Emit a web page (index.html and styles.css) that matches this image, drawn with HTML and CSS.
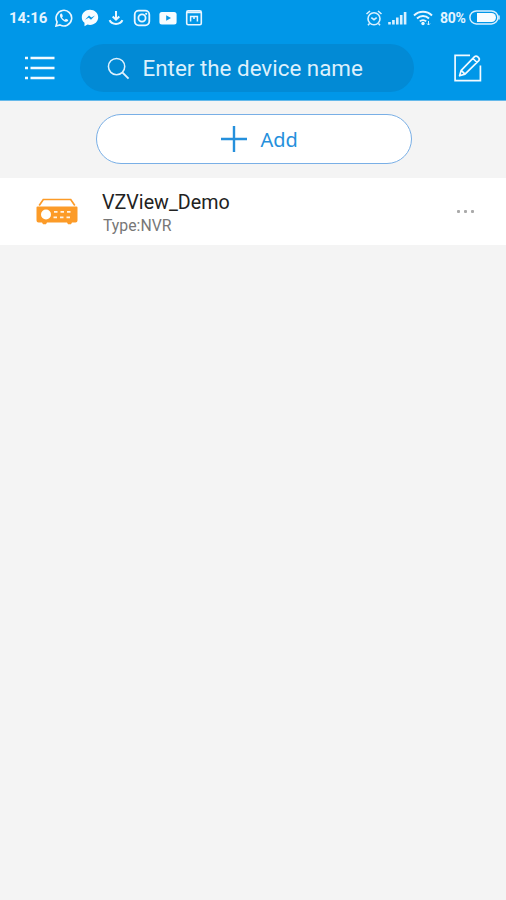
FILE: index.html
```html
<!DOCTYPE html>
<html lang="en">
<head>
<meta charset="utf-8">
<title>Devices</title>
<link rel="stylesheet" href="styles.css">
</head>
<body>
<header class="header">
  <div class="status">
    <div class="status-left">
      <span class="time">14:16</span>
      <svg class="notif" viewBox="0 0 18 18"><path d="M1 17l1.100-4A7.800 7.800 0 1 1 5 15.900z" fill="none" stroke="#e9f6ff" stroke-width="1.600"/><path d="M6 4.600c-2 1.400-.8 4.100 1.200 6.100s4.700 3 6 1.100l-.2-1-2.100-1-1.200 1.100C8.300 10.300 7.400 9.400 7 8.300l.9-1.100L7 4.700z" fill="#e9f6ff"/></svg>
      <svg class="notif" viewBox="0 0 18 18"><path d="M9 .8C4.300.8.800 4 .8 8.300c0 2.300 1 4.200 2.700 5.500v3.400l3-1.600c.8.200 1.600.3 2.500.3 4.700 0 8.200-3.300 8.200-7.600S13.700.8 9 .8z" fill="#f7fcff"/><path d="M4 10.800l4-4.200 2.300 2 3.700-2-4 4.200-2.300-2z" fill="#0997e5"/></svg>
      <svg class="notif" viewBox="0 0 18 18"><path d="M9 2v8M5.700 7.500L9 10.700l3.300-3.200M2.600 11.200c2 5 10.800 5 12.800 0" fill="none" stroke="#e9f6ff" stroke-width="2"/></svg>
      <svg class="notif" viewBox="0 0 18 18"><rect x="1.700" y="1.700" width="14.600" height="14.600" rx="4" fill="none" stroke="#e9f6ff" stroke-width="1.800"/><circle cx="9" cy="9" r="3.600" fill="none" stroke="#e9f6ff" stroke-width="1.800"/><circle cx="13.200" cy="4.800" r="1.100" fill="#e9f6ff"/></svg>
      <svg class="notif" viewBox="0 0 18 18"><rect x=".4" y="3" width="17.200" height="12.400" rx="2.500" fill="#f7fcff"/><path d="M7.200 6.300v5.400L12 9z" fill="#0997e5"/></svg>
      <svg class="notif" viewBox="0 0 18 18"><rect x="1.700" y="1.900" width="14.600" height="13.800" rx="1.500" fill="none" stroke="#e9f6ff" stroke-width="1.600"/><path d="M2 3.500h14" stroke="#e9f6ff" stroke-width="1.500"/><path d="M5.600 12.500V7.600h6.800v4.900M9 8v2" fill="none" stroke="#e9f6ff" stroke-width="1.500"/></svg>
    </div>
    <div class="status-right">
      <svg class="alarm" viewBox="0 0 18 18"><circle cx="9" cy="9.800" r="6" fill="none" stroke="#d9f0ff" stroke-width="1.600"/><path d="M1.500 5L5 2M16.500 5L13 2M6.300 8.600L9 10.700l2.700-2.100M4.500 14.500L3 16.200M13.500 14.500l1.500 1.700" fill="none" stroke="#d9f0ff" stroke-width="1.600"/></svg>
      <svg class="signal" viewBox="0 0 19 14"><path d="M1.500 13.500v-2.500M5.400 13.500V9M9.300 13.500V6.500M13.200 13.500V4M17.100 13.500V1" stroke="#d9f0ff" stroke-width="2.600"/></svg>
      <svg class="wifi" viewBox="0 0 20 16"><path d="M1 5.500c5-5 13-5 18 0M4 8.500c3.400-3.300 8.600-3.300 12 0M6.800 11.400c1.800-1.700 4.600-1.700 6.400 0" fill="none" stroke="#e9f6ff" stroke-width="1.900"/><circle cx="10" cy="13.500" r="1.700" fill="#e9f6ff"/><path d="M15.500 11v4M14 13.500l1.500 1.500 1.500-1.500" fill="none" stroke="#d9f0ff"/></svg>
      <span class="percent">80%</span>
      <svg class="battery" viewBox="0 0 31 15"><rect x=".9" y=".9" width="28" height="13" rx="6.500" fill="none" stroke="#d9f0ff" stroke-width="1.500"/><path d="M8 3h14.500a4.500 4.500 0 0 1 0 9H8z" fill="#f7fcff"/><path d="M30 5.500v4" stroke="#d9f0ff" stroke-width="1.500"/></svg>
    </div>
  </div>
  <div class="toolbar">
    <svg class="menu" viewBox="0 0 30 26"><path d="M0 3h3M5.500 3h24M0 13h3M5.500 13h24M0 23h3M5.500 23h24" stroke="#f2faff" stroke-width="2.400"/></svg>
    <div class="search">
      <svg class="lens" viewBox="0 0 24 24"><circle cx="10" cy="10" r="8.500" fill="none" stroke="#dff1fd" stroke-width="1.600"/><path d="M16 16l6.500 6.500" stroke="#dff1fd" stroke-width="2"/></svg>
      <span class="placeholder">Enter the device name</span>
    </div>
    <svg class="edit" viewBox="0 0 28 28"><path d="M16 1.300H1.100v25.400h25.300V11.500" fill="none" stroke="#f2faff" stroke-width="1.700"/><path d="M5.600 21.800l1.600-5.500L20.600 2.700c2-1.800 6 1.600 4.200 4L11 20.100zM19 4.500l4 4M7.200 16.300l3.800 3.800" fill="none" stroke="#f2faff" stroke-width="1.700" stroke-linejoin="round"/></svg>
  </div>
</header>
<main>
  <div class="add-area">
    <div class="add">
      <svg class="plus" viewBox="0 0 26 26"><path d="M13 0v26M0 13h26" stroke="#2590dc" stroke-width="2.400"/></svg>
      <span class="add-label">Add</span>
    </div>
  </div>
  <div class="device">
    <svg class="recorder" viewBox="0 0 42 27"><path d="M3.200 7.500L7.300 1.500h27.400l4.100 6" fill="none" stroke="#fc9b28" stroke-width="1.700"/><path d="M1.500 8.500h39a1 1 0 0 1 1 1v13a2 2 0 0 1-2 2H36l-1 1.800h-3l-1-1.800H11l-1 1.800H7l-1-1.800H2.500a2 2 0 0 1-2-2v-13a1 1 0 0 1 1-1z" fill="#fc9b28"/><circle cx="10" cy="16.500" r="5" fill="#fff"/><path d="M18 13.800h3.500M24.500 13.800H28M31 13.800h3.500M17.500 19.300H21M24 19.300h3.500M30.500 19.300H34" stroke="#fff3e4" stroke-width="1.700"/></svg>
    <div class="info">
      <div class="name">VZView_Demo</div>
      <div class="type">Type:NVR</div>
    </div>
    <div class="more"><i></i><i></i><i></i></div>
  </div>
</main>
</body>
</html>
```
FILE: styles.css
```css
* { box-sizing: border-box; }
body {
  margin: 0;
  min-height: 900px;
  background: #f4f4f4;
  font-family: Roboto, "Liberation Sans", sans-serif;
}
svg { display: block; flex: none; }
span, .name, .type { white-space: nowrap; }
.header {
  height: 101px;
  background: #0097e8;
  border-bottom: 1px solid #65b9ea;
}
.status {
  height: 35px;
  padding: 0 6px 0 9px;
  display: flex;
  align-items: center;
  justify-content: space-between;
  color: #e4f4ff;
}
.status-left { display: flex; align-items: center; gap: 8px; }
.time { width: 37.5px; font-size: 15px; font-weight: 700; letter-spacing: -.1px; }
.notif { width: 18px; height: 18px; }
.status-right { display: flex; align-items: center; }
.alarm { width: 18px; height: 18px; }
.signal { width: 19px; height: 14px; margin-left: 5px; }
.wifi { width: 20px; height: 16px; margin-left: 6px; }
.percent { width: 27px; margin-left: 7px; font-size: 14px; font-weight: 700; letter-spacing: -.3px; }
.battery { width: 31px; height: 15px; margin-left: 2px; }
.toolbar {
  height: 66px;
  padding: 0 24px 0 25px;
  display: flex;
  align-items: center;
}
.menu { width: 30px; height: 26px; }
.search {
  flex: none;
  width: 334px;
  height: 48px;
  margin-left: 25px;
  padding-left: 27px;
  border-radius: 24px;
  background: #028ad5;
  display: flex;
  align-items: center;
}
.lens { width: 23px; height: 23px; }
.placeholder { margin: 0 0 0 12.5px; font-size: 22.4px; color: #dcf0fc; }
.edit { width: 28px; height: 28px; margin-left: 40px; }
.add-area { height: 77px; display: flex; justify-content: center; align-items: flex-start; padding: 13px 0 0 1px; }
.add {
  width: 316px;
  height: 50px;
  border: 1px solid #79afe6;
  border-radius: 25px;
  background: #fff;
  display: flex;
  align-items: center;
  padding-left: 124px;
}
.plus { width: 26px; height: 26px; }
.add-label { margin: 0 0 0 14px; font-family: "Noto Sans", sans-serif; font-size: 20px; color: #2590dc; }
.device {
  height: 67px;
  padding: 0 32px 0 36px;
  background: #fff;
  display: flex;
  align-items: center;
}
.recorder { width: 42px; height: 27px; margin-bottom: 1px; }
.info { margin: 4px 0 0 24px; }
.name { font-size: 19.7px; line-height: 25px; color: #222; }
.type { padding-left: 1px; font-size: 15.8px; line-height: 22px; color: #777; }
.more { display: flex; gap: 4px; margin-left: auto; }
.more i { width: 3px; height: 3px; border-radius: 1px; background: #aaa; }
```
